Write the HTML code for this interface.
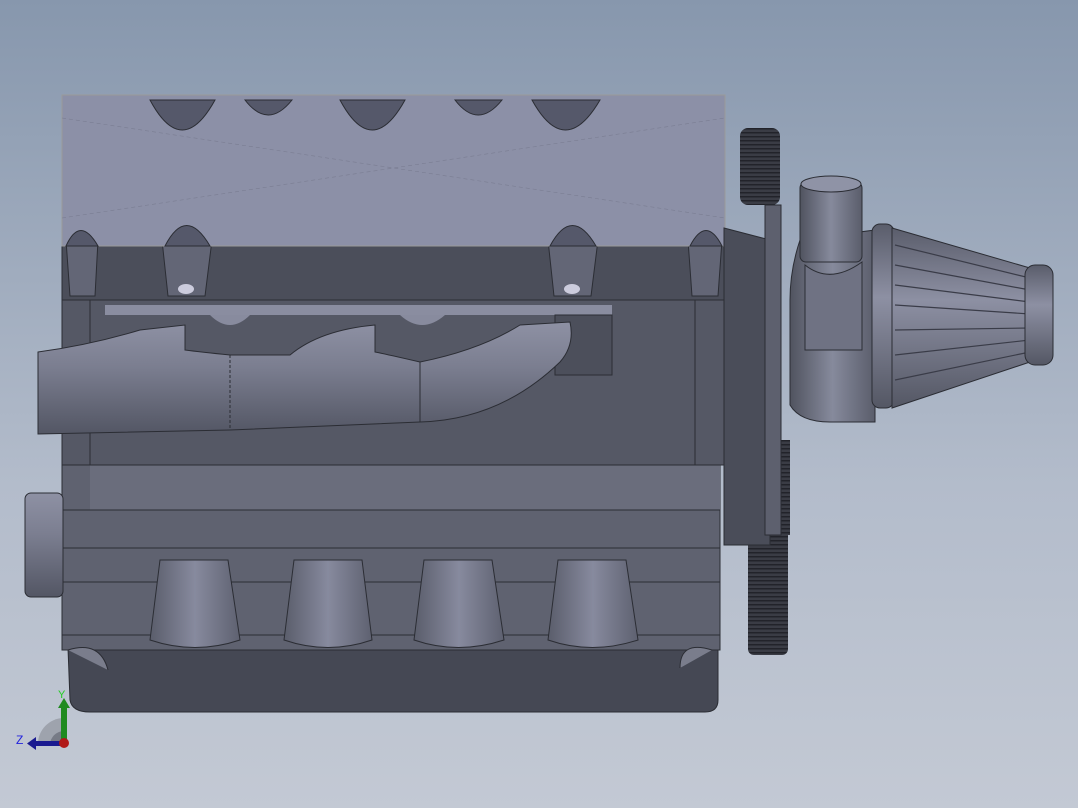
<!DOCTYPE html>
<html><head><style>
html,body{margin:0;padding:0;}
body{width:1078px;height:808px;overflow:hidden;background:linear-gradient(#8797ad,#b3bccb 60%,#c3c9d4);}
svg{position:absolute;left:0;top:0;}
</style></head><body>
<svg width="1078" height="808" viewBox="0 0 1078 808">
<defs>
<linearGradient id="pipe" x1="0" y1="0" x2="0" y2="1"><stop offset="0" stop-color="#8e91a4"/><stop offset="0.4" stop-color="#7b7e90"/><stop offset="1" stop-color="#535664"/></linearGradient>
<linearGradient id="cyl" x1="0" y1="0" x2="1" y2="0"><stop offset="0" stop-color="#5a5d6b"/><stop offset="0.5" stop-color="#878a9e"/><stop offset="1" stop-color="#5e6170"/></linearGradient>
<linearGradient id="cone" x1="0" y1="0" x2="0" y2="1"><stop offset="0" stop-color="#5a5d6b"/><stop offset="0.4" stop-color="#8d90a3"/><stop offset="1" stop-color="#545764"/></linearGradient>
<linearGradient id="turbo" x1="0" y1="0" x2="1" y2="0"><stop offset="0" stop-color="#50535f"/><stop offset="0.5" stop-color="#868a9c"/><stop offset="1" stop-color="#5a5d6b"/></linearGradient>
<pattern id="teeth" width="4" height="4" patternUnits="userSpaceOnUse"><rect width="4" height="4" fill="#3a3c45"/><rect width="4" height="1.5" fill="#22232a"/></pattern>
</defs>
<path d="M68 648 H718 V700 Q718 712 705 712 H90 Q72 712 70 700 Z" fill="#454854" stroke="#2b2d34"/>
<rect x="62" y="465" width="658" height="185" fill="#5f6270" stroke="#2b2d34"/>
<rect x="90" y="465" width="630" height="45" fill="#6a6d7c"/>
<line x1="62" y1="510" x2="720" y2="510" stroke="#2b2d34"/>
<line x1="62" y1="548" x2="720" y2="548" stroke="#2b2d34"/>
<line x1="62" y1="582" x2="720" y2="582" stroke="#2b2d34"/>
<line x1="62" y1="635" x2="720" y2="635" stroke="#2b2d34"/>
<path d="M68 650 Q100 640 108 670" fill="#7a7d8c" stroke="#2b2d34"/>
<path d="M712 650 Q680 640 680 668" fill="#7a7d8c" stroke="#2b2d34"/>
<g stroke="#2b2d34" fill="url(#cyl)">
<path d="M150 640 L160 560 H228 L240 640 Q195 655 150 640Z"/>
<path d="M284 640 L294 560 H362 L372 640 Q328 655 284 640Z"/>
<path d="M414 640 L424 560 H492 L504 640 Q458 655 414 640Z"/>
<path d="M548 640 L558 560 H626 L638 640 Q592 655 548 640Z"/>
</g>
<rect x="25" y="493" width="38" height="104" rx="6" fill="url(#pipe)" stroke="#2b2d34"/>
<rect x="62" y="300" width="662" height="165" fill="#555865" stroke="#2b2d34"/>
<rect x="105" y="305" width="507" height="10" fill="#8a8da0"/>
<rect x="555" y="315" width="57" height="60" fill="#4c4f5b" stroke="#2b2d34"/>
<line x1="695" y1="300" x2="695" y2="465" stroke="#2b2d34"/>
<line x1="90" y1="300" x2="90" y2="465" stroke="#2b2d34"/>
<path d="M210 315 Q230 335 250 315Z" fill="#888b9e"/>
<path d="M400 315 Q422 335 445 315Z" fill="#888b9e"/>
<path d="M38 352 Q90 345 140 330 L185 325 V350 Q200 352 230 355 L290 355 Q320 330 375 325 V352 Q390 355 420 362 Q480 350 520 325 L570 322 Q575 345 560 362 Q500 420 420 422 L230 430 L38 434 Z" fill="url(#pipe)" stroke="#2b2d34"/>
<line x1="230" y1="355" x2="230" y2="430" stroke="#2b2d34" stroke-dasharray="3 2"/>
<line x1="420" y1="362" x2="420" y2="422" stroke="#2b2d34"/>
<rect x="62" y="246" width="663" height="54" fill="#4b4e5a" stroke="#2b2d34"/>
<g fill="#636676" stroke="#2b2d34">
<path d="M162 240 L168 296 H205 L212 240Z"/>
<path d="M548 240 L554 296 H591 L598 240Z"/>
<path d="M66 240 L70 296 H95 L98 240Z"/>
<path d="M688 240 L692 296 H718 L722 240Z"/>
</g>
<ellipse cx="186" cy="289" rx="8" ry="5" fill="#ccd"/>
<ellipse cx="572" cy="289" rx="8" ry="5" fill="#ccd"/>
<rect x="62" y="95" width="663" height="151" fill="#8c90a7" stroke="#9a9a9a"/>
<g fill="#55586a" stroke="#2b2d34">
<path d="M150 100 Q182 160 215 100Z"/><path d="M245 100 Q268 130 292 100Z"/>
<path d="M340 100 Q372 160 405 100Z"/><path d="M455 100 Q478 130 502 100Z"/>
<path d="M532 100 Q565 160 600 100Z"/>
<path d="M165 246 Q186 205 210 246Z"/><path d="M550 246 Q572 205 596 246Z"/>
<path d="M66 246 Q80 215 98 246Z"/><path d="M690 246 Q706 215 722 246Z"/>
</g>
<path d="M62 118 L725 218 M62 218 L725 118" stroke="#7a7d92" stroke-width="0.6" stroke-dasharray="4 3"/>
<rect x="740" y="128" width="40" height="77" rx="8" fill="url(#teeth)"/>
<rect x="748" y="520" width="40" height="135" rx="6" fill="url(#teeth)"/>
<rect x="770" y="440" width="20" height="95" fill="url(#teeth)"/>
<path d="M724 228 L770 240 V545 H724Z" fill="#4a4d59" stroke="#2b2d34"/>
<rect x="765" y="205" width="16" height="330" fill="#5d606e" stroke="#2b2d34"/>
<path d="M800 240 Q790 270 790 300 V405 Q800 422 830 422 H875 V230 Z" fill="url(#turbo)" stroke="#2b2d34"/>
<rect x="800" y="182" width="62" height="80" rx="6" fill="url(#turbo)" stroke="#2b2d34"/>
<ellipse cx="831" cy="184" rx="30" ry="8" fill="#8f93a6" stroke="#2b2d34"/>
<path d="M805 265 Q830 285 862 262 V350 H805Z" fill="#6f7283" stroke="#2b2d34"/>
<rect x="872" y="224" width="22" height="184" rx="8" fill="url(#cone)" stroke="#2b2d34"/>
<path d="M892 228 L1030 268 V362 L892 408 Z" fill="url(#cone)" stroke="#2b2d34"/>
<g stroke="#3a3c48" stroke-width="1.2">
<line x1="895" y1="245" x2="1030" y2="278"/><line x1="895" y1="265" x2="1030" y2="290"/>
<line x1="895" y1="285" x2="1030" y2="302"/><line x1="895" y1="305" x2="1030" y2="314"/>
<line x1="895" y1="330" x2="1030" y2="328"/><line x1="895" y1="355" x2="1030" y2="340"/>
<line x1="895" y1="380" x2="1030" y2="352"/>
</g>
<rect x="1025" y="265" width="28" height="100" rx="10" fill="url(#cone)" stroke="#2b2d34"/>
<path d="M38 745 A26 26 0 0 1 64 718 V745Z" fill="#9ea3ad"/>
<path d="M50 745 A14 14 0 0 1 64 731 V745Z" fill="#777b86"/>
<rect x="61" y="705" width="6" height="38" fill="#1f8a1f"/>
<path d="M58 708 L64 698 L70 708Z" fill="#1f8a1f"/>
<rect x="33" y="741" width="30" height="5" fill="#1a1a90"/>
<path d="M36 737 L27 743.5 L36 750Z" fill="#1a1a90"/>
<circle cx="64" cy="743" r="5" fill="#b01818"/>
<text x="58" y="698" font-family="Liberation Sans,sans-serif" font-size="11" fill="#22cc22">Y</text>
<text x="16" y="744" font-family="Liberation Sans,sans-serif" font-size="12" fill="#2222dd">Z</text>
</svg>
</body></html>
